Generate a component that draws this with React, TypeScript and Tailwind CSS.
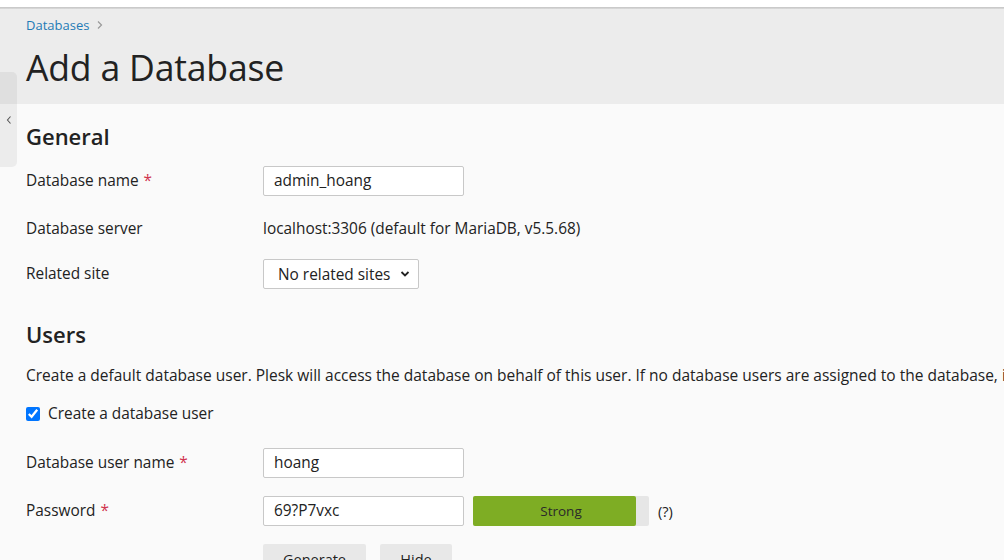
import React from "react";

function Req() {
  return <span className="text-[#d0334e] ml-[5px]">*</span>;
}

export default function App() {
  return (
    <div
      className="relative w-[1004px] h-[560px] overflow-hidden bg-[#fafafa] text-[#222] text-[15.4px]"
      style={{ fontFamily: '"Open Sans", "Noto Sans", sans-serif' }}
    >
      <div className="h-[7px] bg-white" />
      <div className="h-[2px] bg-gradient-to-b from-[#c4c4c4] to-[#dcdcdc]" />
      <div className="bg-[#ececec] h-[95px] pl-[26px] pt-[6px]">
        <div className="flex items-center gap-[6px] text-[13px] leading-[20px] text-[#1f7bb6]">
          <span>Databases</span>
          <svg width="8" height="10" viewBox="0 0 8 10" className="ml-[1px]">
            <path d="M2 1.5 L5.5 5 L2 8.5" fill="none" stroke="#9a9a9a" strokeWidth="1.2" />
          </svg>
        </div>
        <h1 className="text-[35.6px] leading-[44px] mt-[10px] text-[#222] font-normal tracking-[-0.2px]">
          Add a Database
        </h1>
      </div>

      <div className="absolute left-0 top-[72px] w-[17px] h-[95px] rounded-r-[5px] bg-[rgba(0,0,0,0.055)] flex items-start justify-center pt-[42px]">
        <svg width="8" height="12" viewBox="0 0 8 12">
          <path d="M5.5 2.5 L2.5 6 L5.5 9.5" fill="none" stroke="#555" strokeWidth="1.1" />
        </svg>
      </div>

      <div className="pl-[26px] pt-[17px] whitespace-nowrap">
        <h2 className="text-[22px] leading-[30px] font-semibold text-[#222]">General</h2>

        <div className="mt-[15px] flex items-center h-[30px]">
          <div className="w-[237px]">
            Database name
            <Req />
          </div>
          <div className="w-[201px] h-[30px] border border-[#c8c8c8] rounded-[2px] bg-white pl-[10px] flex items-center">
            admin_hoang
          </div>
        </div>

        <div className="mt-[18px] flex items-center h-[30px]">
          <div className="w-[237px]">Database server</div>
          <div>localhost:3306 (default for MariaDB, v5.5.68)</div>
        </div>

        <div className="mt-[15px] flex items-center h-[30px]">
          <div className="w-[237px]">Related site</div>
          <div className="w-[156px] h-[30px] border border-[#c8c8c8] rounded-[2px] bg-white pl-[14px] pr-[8px] flex items-center justify-between">
            <span className="mt-[2px]">No related sites</span>
            <svg width="10" height="8" viewBox="0 0 10 8">
              <path d="M1.5 2 L5 5.5 L8.5 2" fill="none" stroke="#222" strokeWidth="1.8" />
            </svg>
          </div>
        </div>

        <h2 className="mt-[30px] text-[22px] leading-[30px] font-semibold text-[#222]">Users</h2>

        <div className="mt-[16px] leading-[20px] text-[15.5px]">
          Create a default database user. Plesk will access the database on behalf of this user. If no
          database users are assigned to the database, it will be impossible to access it.
        </div>

        <label className="mt-[19px] flex items-center h-[20px] gap-[8px]">
          <input type="checkbox" defaultChecked className="w-[14px] h-[14px] m-0" />
          <span>Create a database user</span>
        </label>

        <div className="mt-[24px] flex items-center h-[30px]">
          <div className="w-[237px]">
            Database user name
            <Req />
          </div>
          <div className="w-[201px] h-[30px] border border-[#c8c8c8] rounded-[2px] bg-white pl-[10px] flex items-center">
            hoang
          </div>
        </div>

        <div className="mt-[18px] flex items-center h-[30px]">
          <div className="w-[237px]">
            Password
            <Req />
          </div>
          <div className="w-[201px] h-[30px] border border-[#c8c8c8] rounded-[2px] bg-white pl-[10px] flex items-center">
            69?P7vxc
          </div>
          <div className="relative ml-[9px] w-[176px] h-[30px] bg-[#e6e6e6] rounded-[2px]">
            <div className="w-[163px] h-full bg-[#7ead24] rounded-[2px]" />
            <span className="absolute inset-0 flex items-center justify-center text-[13.5px] text-[#2a2a2a]">
              Strong
            </span>
          </div>
          <span className="ml-[9px] mt-[2px] text-[14.5px]">(?)</span>
        </div>

        <div className="mt-[18px] flex gap-[14px] ml-[237px]">
          <div className="w-[103px] h-[32px] bg-[#e8e8e8] rounded-[2px] flex items-center justify-center text-[14.5px]">
            Generate
          </div>
          <div className="w-[72px] h-[32px] bg-[#e8e8e8] rounded-[2px] flex items-center justify-center text-[14.5px]">
            Hide
          </div>
        </div>
      </div>
    </div>
  );
}
